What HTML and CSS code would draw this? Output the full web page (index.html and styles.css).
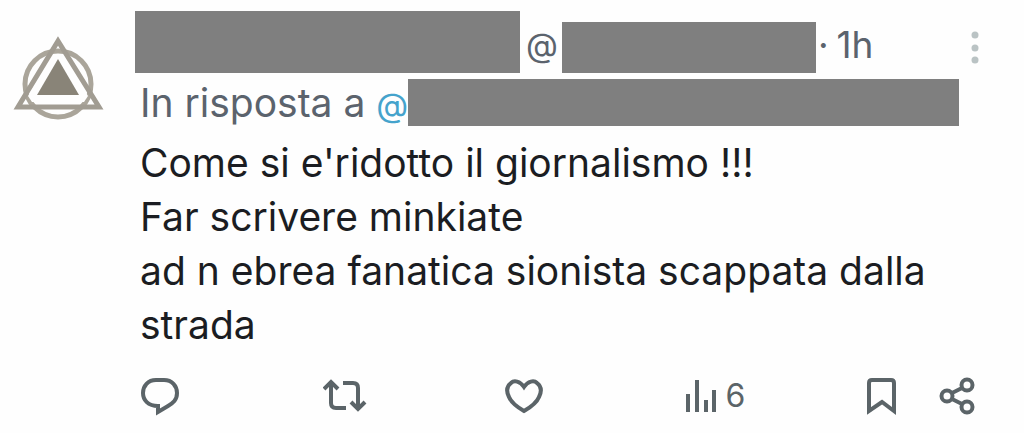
FILE: index.html
```html
<!DOCTYPE html>
<html lang="it">
<head>
<meta charset="utf-8">
<meta name="viewport" content="width=device-width, initial-scale=1">
<title>Post</title>
<link rel="stylesheet" href="styles.css">
</head>
<body>
<article class="post">
  <svg class="avatar" viewBox="0 0 92 86" aria-hidden="true">
    <circle class="avatar-ring" cx="45" cy="48" r="33"/>
    <path class="avatar-frame" d="M45 5 5 71H86Z"/>
    <path class="avatar-gap" d="M41 19H49L75 60 71 66H19L15 60Z"/>
    <path class="avatar-core" d="M45 23 24 59H66Z"/>
  </svg>
  <div class="content">
    <header class="header">
      <span class="bar bar-name"></span>
      <span class="handle">@</span>
      <span class="bar bar-handle"></span>
      <span class="dot">·</span>
      <time class="time">1h</time>
      <button class="button more" type="button" aria-label="Altro">
        <svg class="icon-more" viewBox="0 0 8 34"><circle cx="4" cy="4" r="3.5"/><circle cx="4" cy="17" r="3.5"/><circle cx="4" cy="29" r="3.5"/></svg>
      </button>
    </header>
    <div class="reply">
      <span>In risposta a <a class="mention" href="#">@</a></span>
      <span class="bar bar-reply"></span>
    </div>
    <p class="text">Come si e'ridotto il giornalismo !!!<br>Far scrivere minkiate<br>ad n ebrea fanatica sionista scappata dalla strada</p>
    <footer class="actions">
      <button class="button" type="button" aria-label="Rispondi">
        <svg class="icon icon-wide" viewBox="0 0 44 40"><path d="M15 4H23C31 4 36 10 36 17C36 24 32 27 27 30L17 36V30C7 30 2 24 2 17C2 10 7 4 15 4Z"/></svg>
      </button>
      <button class="button" type="button" aria-label="Ripubblica">
        <svg class="icon icon-wide" viewBox="0 0 44 40"><path d="M1 13 8 6 15 13M8 7V27Q8 32 13 32H23M20 7H30Q35 7 35 12V32M28 26 35 33 42 26"/></svg>
      </button>
      <button class="button" type="button" aria-label="Mi piace">
        <svg class="icon icon-wide" viewBox="0 0 44 40"><path d="M20 11C16 5 10 4 7 7C3 10 2 15 5 21C7 26 13 31 20 35C27 31 33 26 35 21C38 15 37 10 33 7C30 4 24 5 20 11Z"/></svg>
      </button>
      <button class="button views" type="button" aria-label="6 visualizzazioni">
        <svg class="icon icon-views" viewBox="0 0 34 40"><path d="M2 18V36M11 4V36M20 24V36M28 14V36"/></svg>
        <span>6</span>
      </button>
      <button class="button save" type="button" aria-label="Salva">
        <svg class="icon icon-save" viewBox="0 0 30 40"><path d="M2 35V7Q2 4 5 4H24Q27 4 27 7V35L15 26Z"/></svg>
      </button>
      <button class="button" type="button" aria-label="Condividi">
        <svg class="icon icon-share" viewBox="0 0 36 40"><circle cx="8" cy="20" r="5.5"/><circle cx="28" cy="9" r="5.5"/><circle cx="28" cy="31" r="5.5"/><path d="M13 17 23 12M13 23 23 28"/></svg>
      </button>
    </footer>
  </div>
</article>
</body>
</html>
```
FILE: styles.css
```css
* {
  box-sizing: border-box;
}

body {
  margin: 0;
  background: #fefefe;
  color: #1b1d22;
  font-family: Inter, "Noto Sans", sans-serif;
}

.post {
  display: flex;
  gap: 30px;
  padding: 11px 45px 16px 13px;
}

.avatar {
  flex: none;
  width: 92px;
  height: 86px;
  margin-top: 25px;
  fill: none;
}

.avatar-ring {
  stroke: #aaa59a;
  stroke-width: 5;
}

.avatar-frame {
  stroke: #a19c92;
  stroke-width: 5;
}

.avatar-gap {
  fill: #fefefe;
}

.avatar-core {
  fill: #898478;
}

.content {
  flex: 1;
  min-width: 0;
}

.header {
  display: flex;
  align-items: flex-end;
  color: #5b636d;
  font-size: 37px;
  line-height: 56px;
}

.bar {
  background: #7f7f7f;
}

.bar-name {
  width: 385px;
  height: 62px;
}

.handle {
  padding: 0 4px 0 6px;
  font-size: 33px;
}

.bar-handle {
  width: 254px;
  height: 51px;
}

.dot {
  padding: 0 8px 0 2px;
}

.button {
  display: flex;
  align-items: center;
  padding: 0;
  border: 0;
  background: none;
  color: #5b6468;
  font: inherit;
  cursor: pointer;
}

.more {
  align-self: center;
  margin-left: auto;
}

.icon-more {
  width: 8px;
  height: 34px;
  margin-top: 12px;
  fill: #bac3c4;
}

.reply {
  display: flex;
  margin-top: 6px;
  padding-left: 5px;
  color: #5b636d;
  font-size: 39px;
  line-height: 47px;
}

.mention {
  color: #45a3cc;
  font-size: 33px;
  text-decoration: none;
}

.bar-reply {
  width: 551px;
  height: 47px;
}

.text {
  margin: 7px 0 24px;
  padding-left: 5px;
  font-size: 39px;
  line-height: 54px;
}

.actions {
  display: grid;
  grid-template-columns: repeat(4, 1fr) auto auto;
  align-items: center;
  padding: 0 4px 0 6px;
}

.icon {
  height: 40px;
  fill: none;
  stroke: #5b6468;
  stroke-width: 4;
}

.icon-wide {
  width: 44px;
}

.icon-views {
  width: 34px;
}

.icon-save {
  width: 30px;
}

.icon-share {
  width: 36px;
}

.views {
  gap: 6px;
  font-size: 32px;
  line-height: 40px;
}

.save {
  margin-right: 42px;
}
```
